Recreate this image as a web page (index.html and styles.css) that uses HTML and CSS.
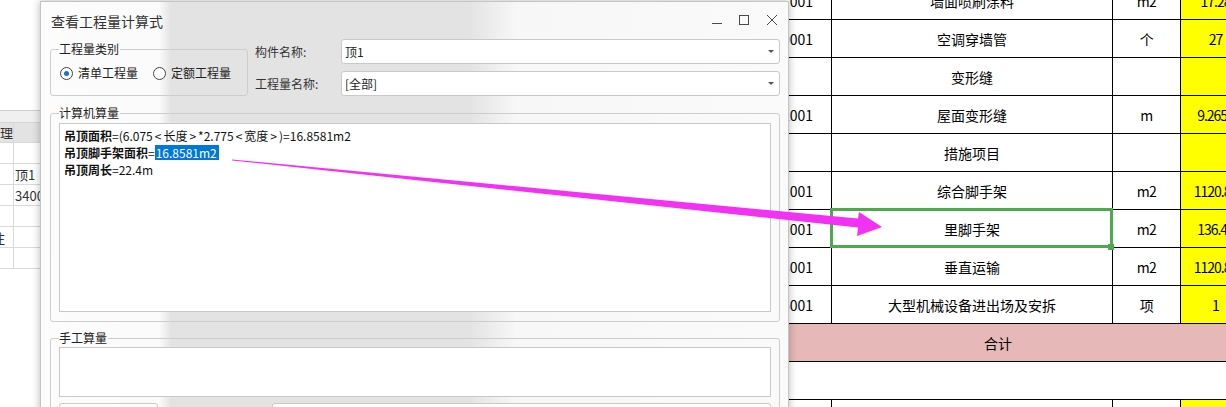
FILE: index.html
```html
<!DOCTYPE html>
<html lang="zh-CN">
<head>
<meta charset="utf-8">
<title>查看工程量计算式</title>
<link rel="stylesheet" href="styles.css">
</head>
<body>
<div class="desktop">
  <div class="sheet-left">
    <div class="sl-blank"></div>
    <div class="sl-band"></div>
    <div class="sl-row sl-head"><span class="sl-a">理</span><span class="sl-b"></span></div>
    <div class="sl-row"><span class="sl-a"></span><span class="sl-b"></span></div>
    <div class="sl-row"><span class="sl-a"></span><span class="sl-b">顶1</span></div>
    <div class="sl-row"><span class="sl-a"></span><span class="sl-b">3400</span></div>
    <div class="sl-row"><span class="sl-a"></span><span class="sl-b"></span></div>
    <div class="sl-row"><span class="sl-a sl-cut">注</span><span class="sl-b"></span></div>
    <div class="sl-row"><span class="sl-a"></span><span class="sl-b"></span></div>
  </div>

  <div class="dialog">
    <div class="titlebar">
      <span class="title">查看工程量计算式</span>
      <svg class="controls" width="80" height="37" viewBox="0 0 80 37">
        <path d="M12 21.5H22" />
        <rect x="39.5" y="13.5" width="9" height="9" />
        <path d="M67 13L77 23M77 13L67 23" />
      </svg>
    </div>

    <div class="top">
      <fieldset class="group g-type">
        <legend>工程量类别</legend>
        <div class="radios">
          <span class="radio on"><span class="dot"></span>清单工程量</span>
          <span class="radio"><span class="dot"></span>定额工程量</span>
        </div>
      </fieldset>
      <div class="form">
        <span class="flabel">构件名称:</span>
        <div class="combo"><span>顶1</span><i class="caret"></i></div>
        <span class="flabel">工程量名称:</span>
        <div class="combo"><span>[全部]</span><i class="caret"></i></div>
      </div>
    </div>

    <fieldset class="group g-calc">
      <legend>计算机算量</legend>
      <div class="calc">
        <div><b>吊顶面积</b>=(6.075<span class="ab">&lt;</span>长度<span class="ab">&gt;</span>*2.775<span class="ab">&lt;</span>宽度<span class="ab">&gt;</span>)=16.8581m2</div>
        <div><b>吊顶脚手架面积</b>=<span class="sel">16.8581m2</span></div>
        <div><b>吊顶周长</b>=22.4m</div>
      </div>
    </fieldset>

    <fieldset class="group g-manual">
      <legend>手工算量</legend>
      <div class="manual"></div>
      <div class="btnrow">
        <div class="btn btn-a"></div>
        <div class="btn btn-b"></div>
      </div>
    </fieldset>
  </div>

  <div class="sheet-right">
    <div class="xl">
      <div class="c c1">011407001</div><div class="c c2">墙面喷刷涂料</div><div class="c c3">m2</div><div class="c c4">17.28</div>
      <div class="c c1">011509001</div><div class="c c2">空调穿墙管</div><div class="c c3">个</div><div class="c c4">27</div>
      <div class="c c1"></div><div class="c c2">变形缝</div><div class="c c3"></div><div class="c c4"></div>
      <div class="c c1">010902001</div><div class="c c2">屋面变形缝</div><div class="c c3">m</div><div class="c c4">9.2650</div>
      <div class="c c1"></div><div class="c c2">措施项目</div><div class="c c3"></div><div class="c c4"></div>
      <div class="c c1">011701001</div><div class="c c2">综合脚手架</div><div class="c c3">m2</div><div class="c c4">1120.80</div>
      <div class="c c1">011701001</div><div class="c c2 sel-cell">里脚手架</div><div class="c c3">m2</div><div class="c c4">136.40</div>
      <div class="c c1">011703001</div><div class="c c2">垂直运输</div><div class="c c3">m2</div><div class="c c4">1120.80</div>
      <div class="c c1">011705001</div><div class="c c2">大型机械设备进出场及安拆</div><div class="c c3">项</div><div class="c c4">1</div>
      <div class="c total">合计</div>
      <div class="c blank"></div>
      <div class="c c1"></div><div class="c c2"></div><div class="c c3"></div><div class="c c4"></div>
    </div>
  </div>

  <svg class="arrow" width="1226" height="407" viewBox="0 0 1226 407">
    <polygon points="232,159.5 858,218.5 859,212 882,227 857,236 858,227.5 232,160.5" />
  </svg>
</div>
</body>
</html>
```

FILE: styles.css
```css
* { box-sizing: border-box; }
html, body { margin: 0; padding: 0; background: #fff; }
body {
  font-family: "Noto Sans CJK SC", "Noto Sans", sans-serif;
  color: #222;
}

.desktop {
  position: relative;
  width: 1226px;
  height: 407px;
  overflow: hidden;
  display: flex;
  align-items: flex-start;
  background: #fff;
}

/* left background spreadsheet */
.sheet-left {
  flex: none;
  width: 40px;
  height: 407px;
  overflow: hidden;
  font-size: 13px;
  color: #333;
}
.sl-blank { height: 110px; }
.sl-band { height: 12px; border-top: 1px solid #cfcfcf; background: #f0f0f0; }
.sl-row {
  display: grid;
  grid-template-columns: 14px 60px;
  height: 21px;
  border-bottom: 1px solid #d9d9d9;
}
.sl-head { background: #e3e3e3; border-top: 1px solid #d4d4d4; }
.sl-a {
  border-right: 1px solid #d9d9d9;
  display: flex;
  justify-content: flex-end;
  align-items: center;
  overflow: hidden;
  white-space: nowrap;
}
.sl-cut { padding-right: 8px; }
.sl-b {
  display: flex;
  align-items: center;
  padding-left: 1px;
  white-space: nowrap;
}

/* dialog window */
.dialog {
  position: relative;
  z-index: 5;
  flex: none;
  width: 749px;
  height: 440px;
  margin-top: 1px;
  border: 1px solid #c4c4c4;
  padding: 0 8px 0 9px;
  background: linear-gradient(to right, #fcfcfc 0, #fbfbfb 118px, #e3e3e3 130px, #e3e3e3 428px, #f7f7f7 475px, #fafafa 100%);
  box-shadow: 0 0 8px rgba(0, 0, 0, 0.28);
  font-size: 12px;
}
.titlebar {
  display: flex;
  align-items: center;
  height: 37px;
}
.title {
  font-size: 14px;
  padding-left: 1px;
  color: #333;
}
.controls {
  margin-left: auto;
  fill: none;
  stroke: #4a4a4a;
  stroke-width: 1;
}

.top {
  display: flex;
  align-items: flex-start;
}
.group {
  margin: 0;
  min-width: 0;
  border: 1px solid #cdcdcd;
  border-radius: 3px;
  padding: 0 8px;
}
.group legend {
  padding: 0 1px 0 0;
  font-size: 12px;
  line-height: 16px;
  color: #222;
}
.g-type {
  flex: none;
  width: 198px;
  margin-top: 2px;
  margin-right: 7px;
}
.radios {
  display: flex;
  align-items: center;
  height: 38px;
  padding: 8px 0 14px;
}
.radio {
  display: flex;
  align-items: center;
  gap: 5px;
  line-height: 16px;
  white-space: nowrap;
}
.radio + .radio { margin-left: 14px; }
.dot {
  width: 13px;
  height: 13px;
  margin-left: 1px;
  border: 1px solid #444;
  border-radius: 50%;
  background: #fff;
  display: grid;
  place-items: center;
}
.radio.on .dot::after {
  content: "";
  width: 5px;
  height: 5px;
  border-radius: 50%;
  background: #1a6fd8;
}

.form {
  flex: 1;
  display: grid;
  grid-template-columns: 86px 1fr;
  grid-auto-rows: 25px;
  row-gap: 7px;
  align-items: center;
}
.flabel { color: #333; white-space: nowrap; }
.combo {
  height: 25px;
  display: flex;
  align-items: center;
  border: 1px solid #c9c9c9;
  border-radius: 3px;
  background: #fff;
  padding: 0 5px 0 3px;
  color: #222;
}
.caret {
  margin-left: auto;
  width: 0;
  height: 0;
  border-left: 3px solid transparent;
  border-right: 3px solid transparent;
  border-top: 3px solid #555;
}

.g-calc {
  margin-top: 9px;
  padding: 2px 8px 9px;
}
.calc {
  height: 189px;
  border: 1px solid #c8c8c8;
  background: #fff;
  padding: 3px 4px;
  line-height: 17px;
  color: #111;
  white-space: nowrap;
}
.calc b { font-weight: 700; }
.calc .ab { margin: 0 2px; }
.sel {
  display: inline-block;
  line-height: 15px;
  padding: 0 2px 0 1px;
  background: #0078d7;
  color: #fff;
}

.g-manual {
  margin-top: 8px;
  padding: 1px 8px 20px;
}
.manual {
  height: 50px;
  border: 1px solid #c8c8c8;
  background: #fff;
}
.btnrow {
  display: flex;
  justify-content: space-between;
  margin-top: 6px;
}
.btn {
  height: 24px;
  border: 1px solid #c8c8c8;
  border-radius: 3px;
  background: #fff;
}
.btn-a { width: 99px; }
.btn-b { width: 499px; }

/* right background spreadsheet */
.sheet-right {
  flex: 1;
  min-width: 0;
  height: 407px;
  overflow: hidden;
}
.xl {
  display: grid;
  grid-template-columns: 86px 281px 68px 70px;
  grid-auto-rows: 38px;
  width: 505px;
  margin: -18px 0 0 -43px;
  font-size: 14px;
  color: #000;
}
.c {
  border-right: 1px solid #000;
  border-bottom: 1px solid #000;
  display: flex;
  align-items: center;
  justify-content: center;
  white-space: nowrap;
  overflow: hidden;
  background: #fff;
}
.c1 { justify-content: flex-end; padding-right: 18px; }
.c3 { letter-spacing: -0.5px; }
.c4 { background: #ffff00; letter-spacing: -1px; }
.total { grid-column: 1 / -1; background: #e6b8b7; }
.blank { grid-column: 1 / -1; border-right: none; }

.sel-cell {
  position: relative;
  overflow: visible;
  z-index: 1;
}
.sel-cell::before {
  content: "";
  position: absolute;
  left: -2px;
  right: -1px;
  top: -2px;
  bottom: -1px;
  border: 3px solid #4ea84e;
}
.sel-cell::after {
  content: "";
  position: absolute;
  right: -2px;
  bottom: -3px;
  width: 6px;
  height: 6px;
  background: #4ea84e;
}

/* annotation arrow */
.arrow {
  position: absolute;
  left: 0;
  top: 0;
  z-index: 10;
  pointer-events: none;
  fill: #f232f2;
}
```
